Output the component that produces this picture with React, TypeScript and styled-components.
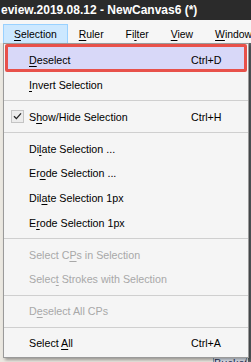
import React from 'react'
import styled, { createGlobalStyle } from 'styled-components'

const GlobalStyle = createGlobalStyle`
  html, body {
    margin: 0;
    padding: 0;
    width: 251px;
    height: 362px;
    overflow: hidden;
    background: #e9e6de;
  }
  #root {
    width: 251px;
    height: 362px;
  }
`

type Item =
  | { kind: 'sep' }
  | {
      kind: 'item'
      label: string
      mnemonic: number
      shortcut?: string
      checked?: boolean
      disabled?: boolean
      annotated?: boolean
    }

const items: Item[] = [
  { kind: 'item', label: 'Deselect', mnemonic: 0, shortcut: 'Ctrl+D', annotated: true },
  { kind: 'item', label: 'Invert Selection', mnemonic: 0 },
  { kind: 'sep' },
  { kind: 'item', label: 'Show/Hide Selection', mnemonic: 1, shortcut: 'Ctrl+H', checked: true },
  { kind: 'sep' },
  { kind: 'item', label: 'Dilate Selection ...', mnemonic: 2 },
  { kind: 'item', label: 'Erode Selection ...', mnemonic: 2 },
  { kind: 'item', label: 'Dilate Selection 1px', mnemonic: 3 },
  { kind: 'item', label: 'Erode Selection 1px', mnemonic: 1 },
  { kind: 'sep' },
  { kind: 'item', label: 'Select CPs in Selection', mnemonic: 8, disabled: true },
  { kind: 'item', label: 'Select Strokes with Selection', mnemonic: 5, disabled: true },
  { kind: 'sep' },
  { kind: 'item', label: 'Deselect All CPs', mnemonic: 1, disabled: true },
  { kind: 'sep' },
  { kind: 'item', label: 'Select All', mnemonic: 7, shortcut: 'Ctrl+A' },
]

const menus = [
  { label: 'Selection', mnemonic: 0, open: true },
  { label: 'Ruler', mnemonic: 0 },
  { label: 'Filter', mnemonic: 2 },
  { label: 'View', mnemonic: 0 },
  { label: 'Window', mnemonic: 0 },
]

const withMnemonic = (label: string, index: number) => (
  <>
    {label.slice(0, index)}
    <u>{label[index]}</u>
    {label.slice(index + 1)}
  </>
)

const App = () => {
  return (
    <Page>
      <GlobalStyle />
      <TitleBar>eview.2019.08.12 - NewCanvas6 (*)</TitleBar>
      <MenuBar>
        {menus.map((m) => (
          <MenuTitle key={m.label} $open={!!m.open}>
            {withMnemonic(m.label, m.mnemonic)}
          </MenuTitle>
        ))}
      </MenuBar>
      <Workspace>
        <BucketButton>Bucket</BucketButton>
        <Dropdown>
          {items.map((it, i) =>
            it.kind === 'sep' ? (
              <Separator key={i} />
            ) : (
              <Row key={i} $disabled={!!it.disabled} $annotated={!!it.annotated}>
                <CheckCell>
                  {it.checked && (
                    <CheckBox>
                      <svg width="9" height="8" viewBox="0 0 9 8">
                        <path d="M1 4.2 L3.4 6.6 L8 1.4" fill="none" stroke="#222" strokeWidth="1.3" />
                      </svg>
                    </CheckBox>
                  )}
                </CheckCell>
                <Label>{withMnemonic(it.label, it.mnemonic)}</Label>
                <Shortcut>{it.shortcut}</Shortcut>
              </Row>
            )
          )}
        </Dropdown>
      </Workspace>
    </Page>
  )
}

const Page = styled.div`
  width: 251px;
  height: 362px;
  display: flex;
  flex-direction: column;
  font-family: 'Liberation Sans', Arial, sans-serif;
  overflow: hidden;
`

const TitleBar = styled.div`
  height: 20px;
  flex: none;
  background: #2b2b2b;
  color: #ffffff;
  font-weight: bold;
  font-size: 12px;
  line-height: 20px;
  padding-left: 1px;
  white-space: nowrap;
`

const MenuBar = styled.div`
  height: 23px;
  flex: none;
  background: #f6f6f6;
  box-sizing: border-box;
  padding: 4px 0 0 3px;
  display: flex;
  align-items: stretch;
  overflow: hidden;
`

const MenuTitle = styled.div<{ $open: boolean }>`
  padding: 0 10px;
  font-size: 10.4px;
  line-height: 19px;
  color: #000;
  white-space: nowrap;
  border: 1px solid ${(p) => (p.$open ? '#99d1ff' : 'transparent')};
  border-bottom: none;
  background: ${(p) => (p.$open ? '#cce8ff' : 'transparent')};
  u {
    text-decoration-thickness: 1px;
    text-underline-offset: 2px;
  }
`

const Workspace = styled.div`
  flex: 1;
  position: relative;
  display: flex;
  justify-content: flex-end;
  align-items: flex-end;
  padding-right: 4px;
  background: linear-gradient(to right, #ebe8e1 0, #ebe8e1 248px, #5d6468 248px);
`

const BucketButton = styled.div`
  width: 34px;
  height: 14px;
  margin-bottom: -8px;
  box-sizing: border-box;
  border: 1px solid #7f9db9;
  background: #dfe6f0;
  color: #1f2f55;
  font-size: 11px;
  line-height: 12px;
  text-align: center;
  overflow: hidden;
`

const Dropdown = styled.div`
  position: absolute;
  left: 3px;
  top: 0;
  width: 246px;
  box-sizing: border-box;
  background: #f5f5f5;
  border: 1px solid #9a9a9a;
  padding: 4px 0 2px;
  box-shadow: 2px 2px 3px rgba(0, 0, 0, 0.35);
`

const Row = styled.div<{ $disabled: boolean; $annotated: boolean }>`
  position: relative;
  isolation: isolate;
  height: 24.6px;
  display: grid;
  grid-template-columns: 25px 162px 1fr;
  align-items: center;
  font-size: 10.7px;
  color: ${(p) => (p.$disabled ? '#a8a8a8' : '#000')};
  white-space: nowrap;
  u {
    text-decoration-thickness: 1px;
    text-underline-offset: 2px;
  }
  ${(p) =>
    p.$annotated &&
    `
    &::before {
      content: '';
      position: absolute;
      left: 1px;
      right: 1px;
      top: -4.5px;
      bottom: 0.5px;
      border: 3px solid #e8514a;
      border-radius: 2px;
      background: #d8d8f8;
      z-index: -1;
    }
  `}
`

const CheckCell = styled.div`
  display: flex;
  align-items: center;
  padding-left: 7px;
`

const CheckBox = styled.div`
  width: 11px;
  height: 11px;
  border: 1px solid #c4c4c4;
  background: #ececec;
  display: flex;
  align-items: center;
  justify-content: center;
  margin-top: -1px;
`

const Label = styled.span``

const Shortcut = styled.span``

const Separator = styled.div`
  height: 7.4px;
  display: flex;
  align-items: center;
  &::after {
    content: '';
    flex: 1;
    height: 1px;
    background: #cfcfcf;
  }
`

export default App
